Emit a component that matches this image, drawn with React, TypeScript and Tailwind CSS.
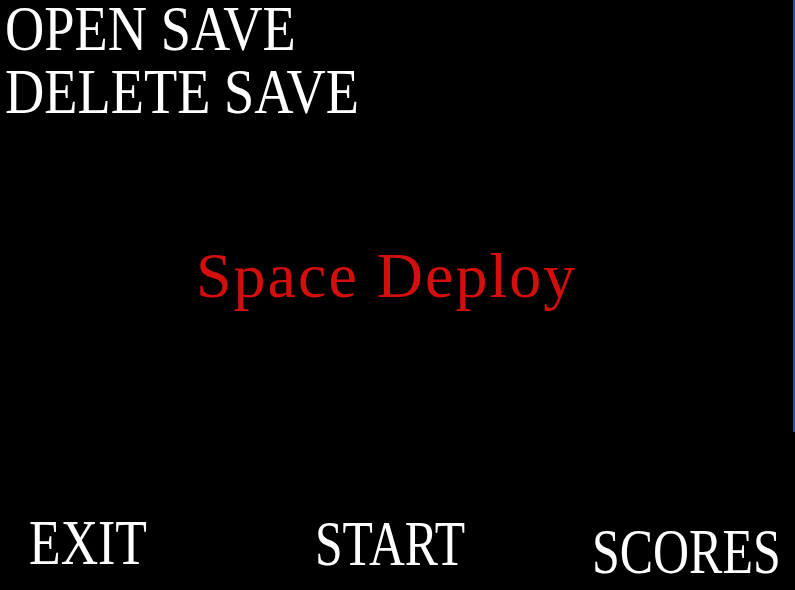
import React from "react";

export default function App() {
  const font = { fontFamily: '"Liberation Serif", "Times New Roman", serif' };
  return (
    <div
      className="relative w-[795px] h-[590px] bg-black overflow-hidden text-white text-[64px] leading-[63px]"
      style={font}
    >
      <div className="absolute right-0 top-0 w-[2px] h-[432px] bg-[#2848c8]" />
      <div className="flex flex-col -mt-[3px] pl-[5px]">
        <div className="scale-x-[0.85] origin-left whitespace-nowrap">OPEN SAVE</div>
        <div className="scale-x-[0.85] origin-left whitespace-nowrap">DELETE SAVE</div>
      </div>
      <div className="mt-[121px] pl-[196px] text-[#d40d0d] tracking-[2px] whitespace-nowrap">
        Space Deploy
      </div>
      <div className="flex items-start mt-[204px] pl-[29px]">
        <div className="w-[286px] shrink-0">
          <div className="scale-x-[0.81] origin-left whitespace-nowrap">EXIT</div>
        </div>
        <div className="w-[277px] shrink-0 mt-[1px]">
          <div className="scale-x-[0.775] origin-left whitespace-nowrap">START</div>
        </div>
        <div className="shrink-0 mt-[9px]">
          <div className="scale-x-[0.78] origin-left whitespace-nowrap">SCORES</div>
        </div>
      </div>
    </div>
  );
}
